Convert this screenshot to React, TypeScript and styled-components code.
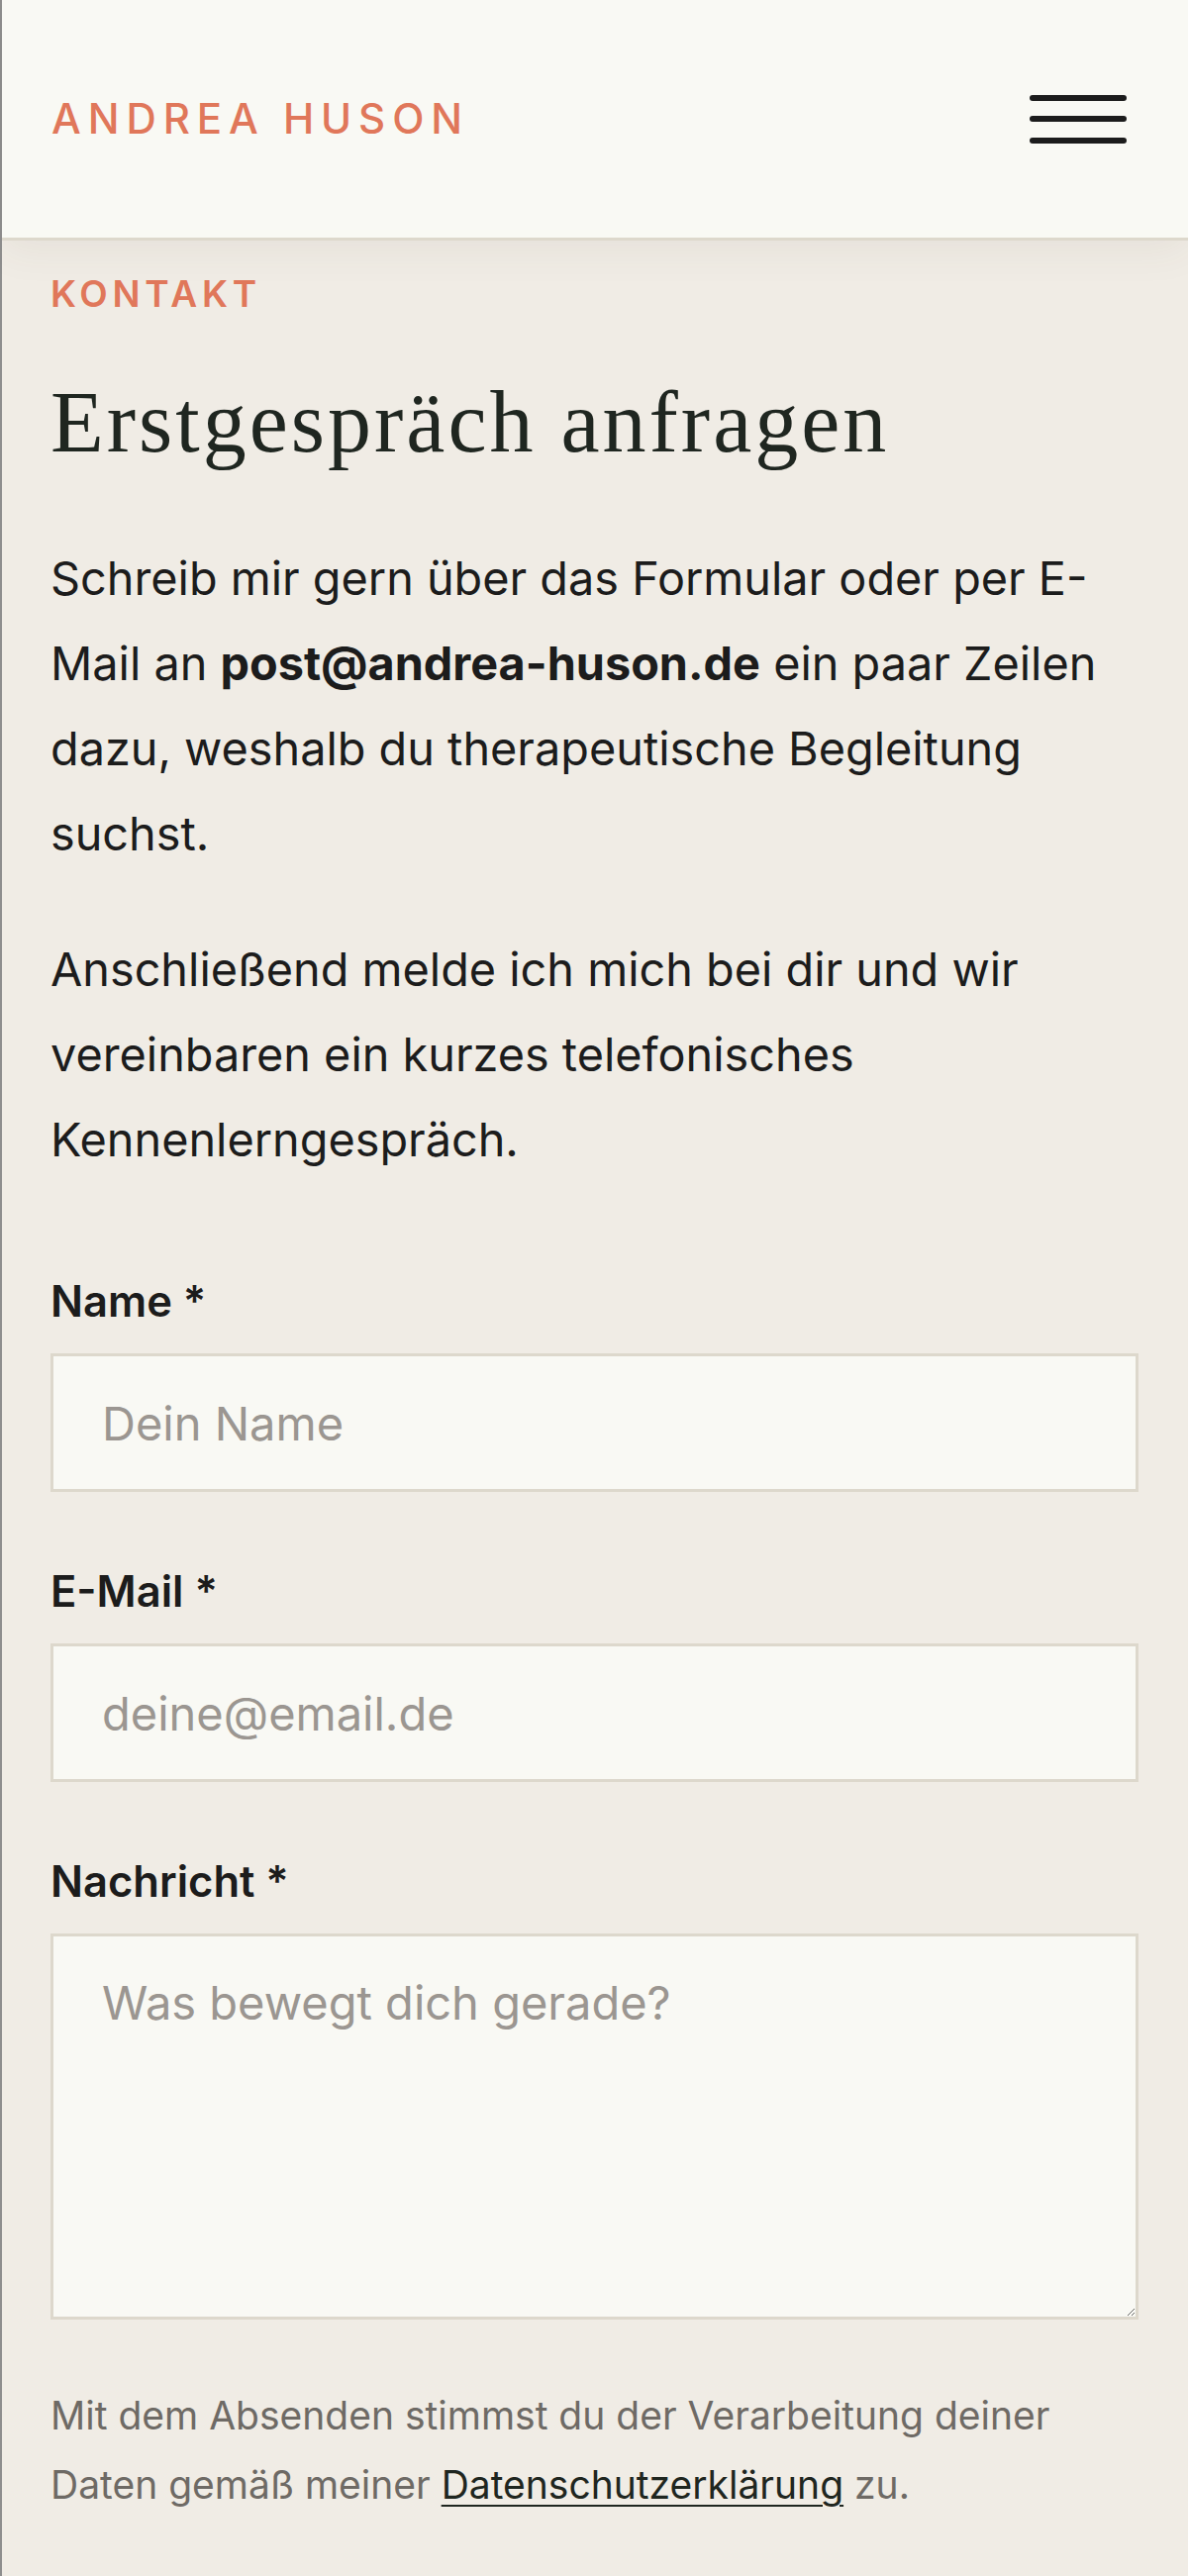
import React from 'react';
import styled, {createGlobalStyle} from 'styled-components';

const GlobalStyle = createGlobalStyle`
  html, body {
    margin: 0;
    padding: 0;
    background: #f0ece5;
  }
  body {
    font-family: Inter, "Liberation Sans", sans-serif;
    -webkit-font-smoothing: antialiased;
  }
  *, *::before, *::after {
    box-sizing: border-box;
  }
`

const Page = styled.div`
  min-height: 2602px;
  background: #f0ece5;
  border-left: 2px solid #8e8e8e;
`

const Header = styled.header`
  position: relative;
  z-index: 1;
  height: 243px;
  display: flex;
  align-items: center;
  justify-content: space-between;
  padding: 0 62px 0 50px;
  background: #f9f9f4;
  border-bottom: 3px solid #ddd8cc;
  box-shadow: 0 8px 40px rgba(80, 70, 50, 0.07);
`

const Logo = styled.a`
  font-size: 42px;
  line-height: 1;
  font-weight: 500;
  letter-spacing: 0.165em;
  color: #e0775a;
  text-decoration: none;
`

const MenuButton = styled.button`
  display: flex;
  flex-direction: column;
  gap: 15.5px;
  width: 98px;
  padding: 0;
  border: 0;
  background: none;
  cursor: pointer;
`

const Bar = styled.span`
  display: block;
  height: 6px;
  border-radius: 3px;
  background: #1c1c1c;
`

const Main = styled.main`
  padding: 32px 50px 120px 49px;
`

const Eyebrow = styled.p`
  margin: 0;
  font-size: 37px;
  line-height: 44px;
  font-weight: 600;
  letter-spacing: 0.128em;
  text-transform: uppercase;
  color: #e0775a;
`

const Title = styled.h1`
  margin: 55px 0 0;
  font-family: "Liberation Serif", "DejaVu Serif", serif;
  font-weight: 400;
  font-size: 88px;
  line-height: 106px;
  letter-spacing: 3px;
  color: #1f2620;
`

const Intro = styled.p<{first?: boolean}>`
  margin: ${props => props.first ? "61px" : "51px"} 0 0;
  font-size: 46.8px;
  line-height: 86px;
  color: #1c1c1c;

  strong {
    font-weight: 700;
  }
`

const Form = styled.form`
  margin-top: 90px;
  display: flex;
  flex-direction: column;
  gap: 70px;
`

const Field = styled.div`
  display: flex;
  flex-direction: column;
  gap: 23px;
`

const Label = styled.label`
  font-size: 43.5px;
  line-height: 60px;
  font-weight: 600;
  color: #1c1c1c;
`

const Input = styled.input`
  height: 140px;
  width: 100%;
  padding: 0 49px;
  border: 3px solid #ddd8cc;
  border-radius: 0;
  background: #f9f9f4;
  font-family: inherit;
  font-size: 47px;
  color: #1c1c1c;
  outline: none;

  &::placeholder {
    color: #9b9691;
  }
`

const TextArea = styled.textarea`
  height: 390px;
  width: 100%;
  padding: 38px 49px;
  border: 3px solid #ddd8cc;
  border-radius: 0;
  background: #f9f9f4;
  font-family: inherit;
  font-size: 47px;
  line-height: 1.25;
  color: #1c1c1c;
  resize: vertical;
  outline: none;

  &::placeholder {
    color: #9b9691;
  }
`

const Consent = styled.p`
  margin: 62px 0 0;
  font-size: 39px;
  line-height: 70px;
  color: #6e6a65;
`

const ConsentLink = styled.a`
  color: #1f2620;
  text-decoration: underline;
  text-decoration-thickness: 2px;
  text-underline-offset: 6px;
`

const fields = [
    {id: "name", label: "Name *", type: "text", placeholder: "Dein Name"},
    {id: "email", label: "E-Mail *", type: "email", placeholder: "deine@email.de"},
]

const App = () => {
    return (
        <Page>
            <GlobalStyle/>
            <Header>
                <Logo href="#">ANDREA HUSON</Logo>
                <MenuButton aria-label="Menü öffnen">
                    <Bar/>
                    <Bar/>
                    <Bar/>
                </MenuButton>
            </Header>
            <Main>
                <Eyebrow>Kontakt</Eyebrow>
                <Title>Erstgespräch anfragen</Title>
                <Intro first>
                    Schreib mir gern über das Formular oder per E-Mail an <strong>post@andrea-huson.de</strong> ein
                    paar Zeilen dazu, weshalb du therapeutische Begleitung suchst.
                </Intro>
                <Intro>
                    Anschließend melde ich mich bei dir und wir vereinbaren ein kurzes telefonisches
                    Kennenlerngespräch.
                </Intro>
                <Form onSubmit={e => e.preventDefault()}>
                    {fields.map(f =>
                        <Field key={f.id}>
                            <Label htmlFor={f.id}>{f.label}</Label>
                            <Input id={f.id} type={f.type} placeholder={f.placeholder}/>
                        </Field>
                    )}
                    <Field>
                        <Label htmlFor="message">Nachricht *</Label>
                        <TextArea id="message" placeholder="Was bewegt dich gerade?"/>
                    </Field>
                </Form>
                <Consent>
                    Mit dem Absenden stimmst du der Verarbeitung deiner Daten gemäß
                    meiner <ConsentLink href="#">Datenschutzerklärung</ConsentLink> zu.
                </Consent>
            </Main>
        </Page>
    );
};

export default App;
